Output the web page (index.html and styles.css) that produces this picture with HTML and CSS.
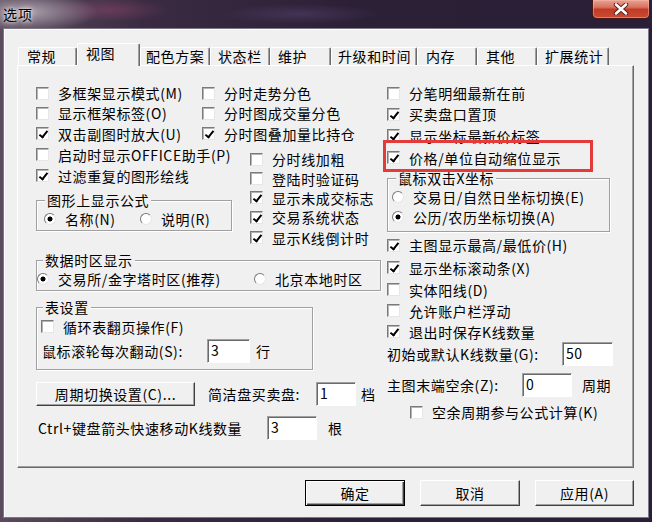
FILE: index.html
```html
<!DOCTYPE html>
<html lang="zh-CN">
<head>
<meta charset="utf-8">
<title>选项</title>
<link rel="stylesheet" href="styles.css">
</head>
<body>
<div class="window">
  <div class="titlebar">
    <span class="title">选项</span>
    <div class="close">
      <svg width="16" height="12" viewBox="0 0 16 12"><path d="M3 1.5 L13 10.5 M13 1.5 L3 10.5" stroke="#5a1a14" stroke-width="4.4" stroke-linecap="round"/><path d="M3 1.5 L13 10.5 M13 1.5 L3 10.5" stroke="#fff" stroke-width="2.6" stroke-linecap="round"/></svg>
    </div>
  </div>
  <div class="client">
    <div class="tabs">
      <div class="tab">常规</div>
      <div class="tab active">视图</div>
      <div class="tab">配色方案</div>
      <div class="tab">状态栏</div>
      <div class="tab">维护</div>
      <div class="tab">升级和时间</div>
      <div class="tab">内存</div>
      <div class="tab">其他</div>
      <div class="tab">扩展统计</div>
    </div>
    <div class="panel">
      <div class="left">
        <div class="grid2">
          <div class="row h20"><span class="cb"></span>多框架显示模式(M)</div>
          <div class="row h20"><span class="cb"></span>分时走势分色</div>
          <div class="row h20"><span class="cb"></span>显示框架标签(O)</div>
          <div class="row h20"><span class="cb"></span>分时图成交量分色</div>
          <div class="row h21"><span class="cb on"></span>双击副图时放大(U)</div>
          <div class="row h21"><span class="cb on"></span>分时图叠加量比持仓</div>
        </div>
        <div class="mid">
          <div class="mid-l">
            <div class="row h21"><span class="cb"></span>启动时显示OFFICE助手(P)</div>
            <div class="row h21"><span class="cb on"></span>过滤重复的图形绘线</div>
            <fieldset class="grp g-formula">
              <legend>图形上显示公式</legend>
              <div class="row h22">
                <span class="opt w96"><span class="rd on"></span>名称(N)</span>
                <span class="opt"><span class="rd"></span>说明(R)</span>
              </div>
            </fieldset>
          </div>
          <div class="mid-r">
            <div class="row h20"><span class="cb"></span>分时线加粗</div>
            <div class="row h19"><span class="cb"></span>登陆时验证码</div>
            <div class="row h19"><span class="cb on"></span>显示未成交标志</div>
            <div class="row h20"><span class="cb on"></span>交易系统状态</div>
            <div class="row h21"><span class="cb on"></span>显示K线倒计时</div>
          </div>
        </div>
        <fieldset class="grp g-tz">
          <legend>数据时区显示</legend>
          <div class="row h22">
            <span class="opt w217"><span class="rd on"></span>交易所/金字塔时区(推荐)</span>
            <span class="opt"><span class="rd"></span>北京本地时区</span>
          </div>
        </fieldset>
        <fieldset class="grp g-table">
          <legend>表设置</legend>
          <div class="row h23"><span class="cb"></span>循环表翻页操作(F)</div>
          <div class="row h26">
            <span class="lbl w165">鼠标滚轮每次翻动(S):</span>
            <span class="inp w43">3</span>
            <span class="unit">行</span>
          </div>
        </fieldset>
        <div class="row h24 btnrow">
          <span class="btn w159">周期切换设置(C)...</span>
          <span class="lbl w108 ml13">简洁盘买卖盘:</span>
          <span class="inp w40">1</span>
          <span class="unit u5">档</span>
        </div>
        <div class="row h24 ctrlrow">
          <span class="lbl w229">Ctrl+键盘箭头快速移动K线数量</span>
          <span class="inp w50">3</span>
          <span class="unit u11">根</span>
        </div>
      </div>
      <div class="right">
        <div class="row h20"><span class="cb"></span>分笔明细最新在前</div>
        <div class="row h22"><span class="cb on"></span>买卖盘口置顶</div>
        <div class="row h21"><span class="cb on"></span>显示坐标最新价标签</div>
        <div class="row h23 marked"><span class="cb on"></span>价格/单位自动缩位显示<span class="mark"></span></div>
        <fieldset class="grp g-dbl">
          <legend>鼠标双击X坐标</legend>
          <div class="row h20"><span class="rd"></span>交易日/自然日坐标切换(E)</div>
          <div class="row h20"><span class="rd on"></span>公历/农历坐标切换(A)</div>
        </fieldset>
        <div class="row h22 mt2"><span class="cb on"></span>主图显示最高/最低价(H)</div>
        <div class="row h23"><span class="cb on"></span>显示坐标滚动条(X)</div>
        <div class="row h21"><span class="cb"></span>实体阳线(D)</div>
        <div class="row h21"><span class="cb"></span>允许账户栏浮动</div>
        <div class="row h21"><span class="cb on"></span>退出时保存K线数量</div>
        <div class="row h24">
          <span class="lbl w175">初始或默认K线数量(G):</span>
          <span class="inp w51">50</span>
        </div>
        <div class="row h24 mt7">
          <span class="lbl w135">主图末端空余(Z):</span>
          <span class="inp w50">0</span>
          <span class="unit u10">周期</span>
        </div>
        <div class="row h20 mt5 indent"><span class="cb"></span>空余周期参与公式计算(K)</div>
      </div>
    </div>
    <div class="actions">
      <span class="btn w100 default">确定</span>
      <span class="btn w100">取消</span>
      <span class="btn w99">应用(A)</span>
    </div>
  </div>
</div>
</body>
</html>
```
FILE: styles.css
```css
* { box-sizing: border-box; }

body {
  margin: 0;
  font-family: "Noto Sans CJK SC", "Noto Sans", sans-serif;
  font-size: 14px;
  line-height: 16px;
  letter-spacing: 0.6px;
  color: #000;
  background: #2a1f35;
}

.window {
  width: 652px;
  height: 522px;
  display: flex;
  flex-direction: column;
  padding: 0 3px 4px 3px;
  background:
    radial-gradient(ellipse 70px 20px at 28px 12px, rgba(200, 190, 200, 0.75), transparent),
    radial-gradient(ellipse 60px 12px at 110px 10px, rgba(150, 70, 110, 0.45), transparent),
    radial-gradient(ellipse 80px 10px at 300px 14px, rgba(90, 70, 120, 0.45), transparent),
    linear-gradient(90deg, #5b4b5d 0%, #3a2b42 22%, #2c2036 55%, #2a1f38 100%);
}

.titlebar {
  height: 28px;
  flex: none;
  display: flex;
  justify-content: space-between;
  align-items: flex-start;
}

.title {
  margin-top: 6px;
  font-size: 14px;
  line-height: 16px;
  letter-spacing: 1px;
  text-shadow: 0 0 6px rgba(255, 255, 255, 0.95), 0 0 3px rgba(255, 255, 255, 0.9);
}

.close {
  width: 58px;
  height: 19px;
  margin-right: -1px;
  border: 1px solid #4b1a16;
  border-top: none;
  border-radius: 0 0 5px 5px;
  background: linear-gradient(#e6a394 0%, #d9725f 40%, #c23b27 52%, #c94a33 100%);
  box-shadow: inset 0 0 0 1px rgba(255, 190, 175, 0.45);
  display: flex;
  align-items: center;
  justify-content: center;
}

.client {
  height: 490px;
  background: #f0f0f0;
  border: 1px solid #7e7886;
  box-shadow: inset 1px 1px 0 #fff;
  padding: 0 14px 0 13px;
  display: flex;
  flex-direction: column;
}

/* tabs */
.tabs {
  display: flex;
  align-items: flex-end;
  height: 23px;
  margin: 14px 0 -1px 1px;
  position: relative;
  z-index: 1;
}

.tab {
  height: 18px;
  margin-bottom: 1px;
  padding-left: 8px;
  border-top: 1px solid #fff;
  border-left: 1px solid #fff;
  border-right: 1px solid #696969;
  box-shadow: inset -1px 0 0 #a0a0a0;
  border-radius: 2px 2px 0 0;
  background: #f0f0f0;
  white-space: nowrap;
}

.tab.active {
  height: 23px;
  margin-bottom: 0;
  padding-top: 1px;
}

.tab:nth-child(1) { width: 59px; }
.tab:nth-child(2) { width: 63px; }
.tab:nth-child(3) { width: 70px; padding-left: 5px; }
.tab:nth-child(4) { width: 60px; padding-left: 7px; }
.tab:nth-child(5) { width: 61px; padding-left: 7px; }
.tab:nth-child(6) { width: 86px; padding-left: 6px; }
.tab:nth-child(7) { width: 60px; }
.tab:nth-child(8) { width: 60px; }
.tab:nth-child(9) { width: 72px; padding-left: 7px; }

/* panel */
.panel {
  width: 617px;
  height: 403px;
  flex: none;
  border: 1px solid;
  border-color: #fff #696969 #696969 #fff;
  box-shadow: inset -1px -1px 0 #a0a0a0;
  padding: 17px 0 0 18px;
  display: flex;
}

.left { width: 351px; flex: none; }
.right { width: 240px; flex: none; }

.grid2 {
  display: grid;
  grid-template-columns: 166px auto;
}

.mid { display: flex; align-items: flex-start; }
.mid-l { width: 214px; flex: none; }
.mid-r { margin-top: 5px; }

.row {
  display: flex;
  align-items: center;
  white-space: nowrap;
}

.h19 { height: 19px; }
.h20 { height: 20px; }
.h21 { height: 21px; }
.h22 { height: 22px; }
.h23 { height: 23px; }
.h24 { height: 24px; }
.h26 { height: 26px; }
.mt2 { margin-top: 2px; }
.mt5 { margin-top: 5px; }
.mt7 { margin-top: 7px; }

.opt { display: flex; align-items: center; }
.w96 { width: 96px; }
.w217 { width: 217px; }

/* checkbox */
.cb {
  width: 13px;
  height: 13px;
  flex: none;
  margin-right: 9px;
  background: #fff;
  border: 1px solid;
  border-color: #7a7a7a #e6e6e6 #e6e6e6 #7a7a7a;
  box-shadow: inset 1px 1px 0 #b4b4b4;
  position: relative;
}

.cb.on::after {
  content: "";
  position: absolute;
  left: 4px;
  top: 1px;
  width: 3px;
  height: 7px;
  border: solid #000;
  border-width: 0 2px 2px 0;
  transform: rotate(38deg);
}

/* radio */
.rd {
  width: 12px;
  height: 12px;
  flex: none;
  margin-right: 9px;
  border-radius: 50%;
  background: #fff;
  border: 1px solid;
  border-color: #7a7a7a #e6e6e6 #e6e6e6 #7a7a7a;
}

.rd.on {
  background: radial-gradient(circle, #000 0 2.2px, #fff 2.8px);
}

/* group boxes */
.grp {
  margin: 0;
  min-width: 0;
  border: 1px solid #a0a0a0;
  box-shadow: inset 1px 1px 0 #fff, 1px 1px 0 #fff;
}

.grp legend {
  padding: 0 2px;
  line-height: 16px;
  background: #f0f0f0;
}

.g-formula {
  width: 196px;
  margin-top: 6px;
  padding: 0 0 0 7px;
}
.g-formula legend { margin-left: 1px; }

.g-tz {
  width: 345px;
  margin-top: 4px;
  padding: 0;
}
.g-tz legend { margin-left: 6px; }

.g-table {
  width: 277px;
  margin-top: 8px;
  padding: 0 0 5px 4px;
}
.g-table legend { margin-left: 2px; }
.g-table .h26 { padding-left: 1px; }

.g-dbl {
  width: 223px;
  margin-top: 1px;
  padding: 1px 0 4px 4px;
}
.g-dbl legend { margin-left: 4px; }

/* inputs and labels */
.lbl { flex: none; }
.w108 { width: 108px; }
.w135 { width: 135px; }
.w165 { width: 165px; }
.w175 { width: 175px; }
.w229 { width: 229px; }
.ml13 { margin-left: 13px; }

.inp {
  height: 24px;
  flex: none;
  background: #fff;
  border: 1px solid;
  border-color: #a0a0a0 #fff #fff #a0a0a0;
  box-shadow: inset 1px 1px 0 #696969;
  padding: 2px 0 0 3px;
  align-self: center;
}
.w40 { width: 40px; }
.w43 { width: 43px; }
.w50 { width: 50px; }
.w51 { width: 51px; }

.unit { margin-left: 6px; }
.unit.u5 { margin-left: 5px; }
.unit.u10 { margin-left: 10px; }
.unit.u11 { margin-left: 11px; }

.btnrow { margin-top: 12px; }
.ctrlrow { margin-top: 10px; padding-left: 2px; }

.indent { padding-left: 23px; }

/* red annotation */
.marked { position: relative; }
.mark {
  position: absolute;
  left: -4px;
  top: -6px;
  width: 210px;
  height: 32px;
  border: 3px solid #e53a3a;
}

/* buttons */
.btn {
  height: 24px;
  flex: none;
  display: flex;
  align-items: center;
  justify-content: center;
  background: #f0f0f0;
  border: 1px solid;
  border-color: #fff #404040 #404040 #fff;
  box-shadow: inset -1px -1px 0 #a0a0a0;
}
.w159 { width: 159px; }
.w99 { width: 99px; }
.w100 { width: 100px; }

.actions {
  display: flex;
  justify-content: flex-end;
  gap: 15px;
  margin-top: 12px;
  width: 617px;
}

.actions .btn { height: 26px; }

.btn.default {
  border-color: #000;
  box-shadow: inset 1px 1px 0 #fff, inset -1px -1px 0 #404040, inset -2px -2px 0 #a0a0a0;
}
```
